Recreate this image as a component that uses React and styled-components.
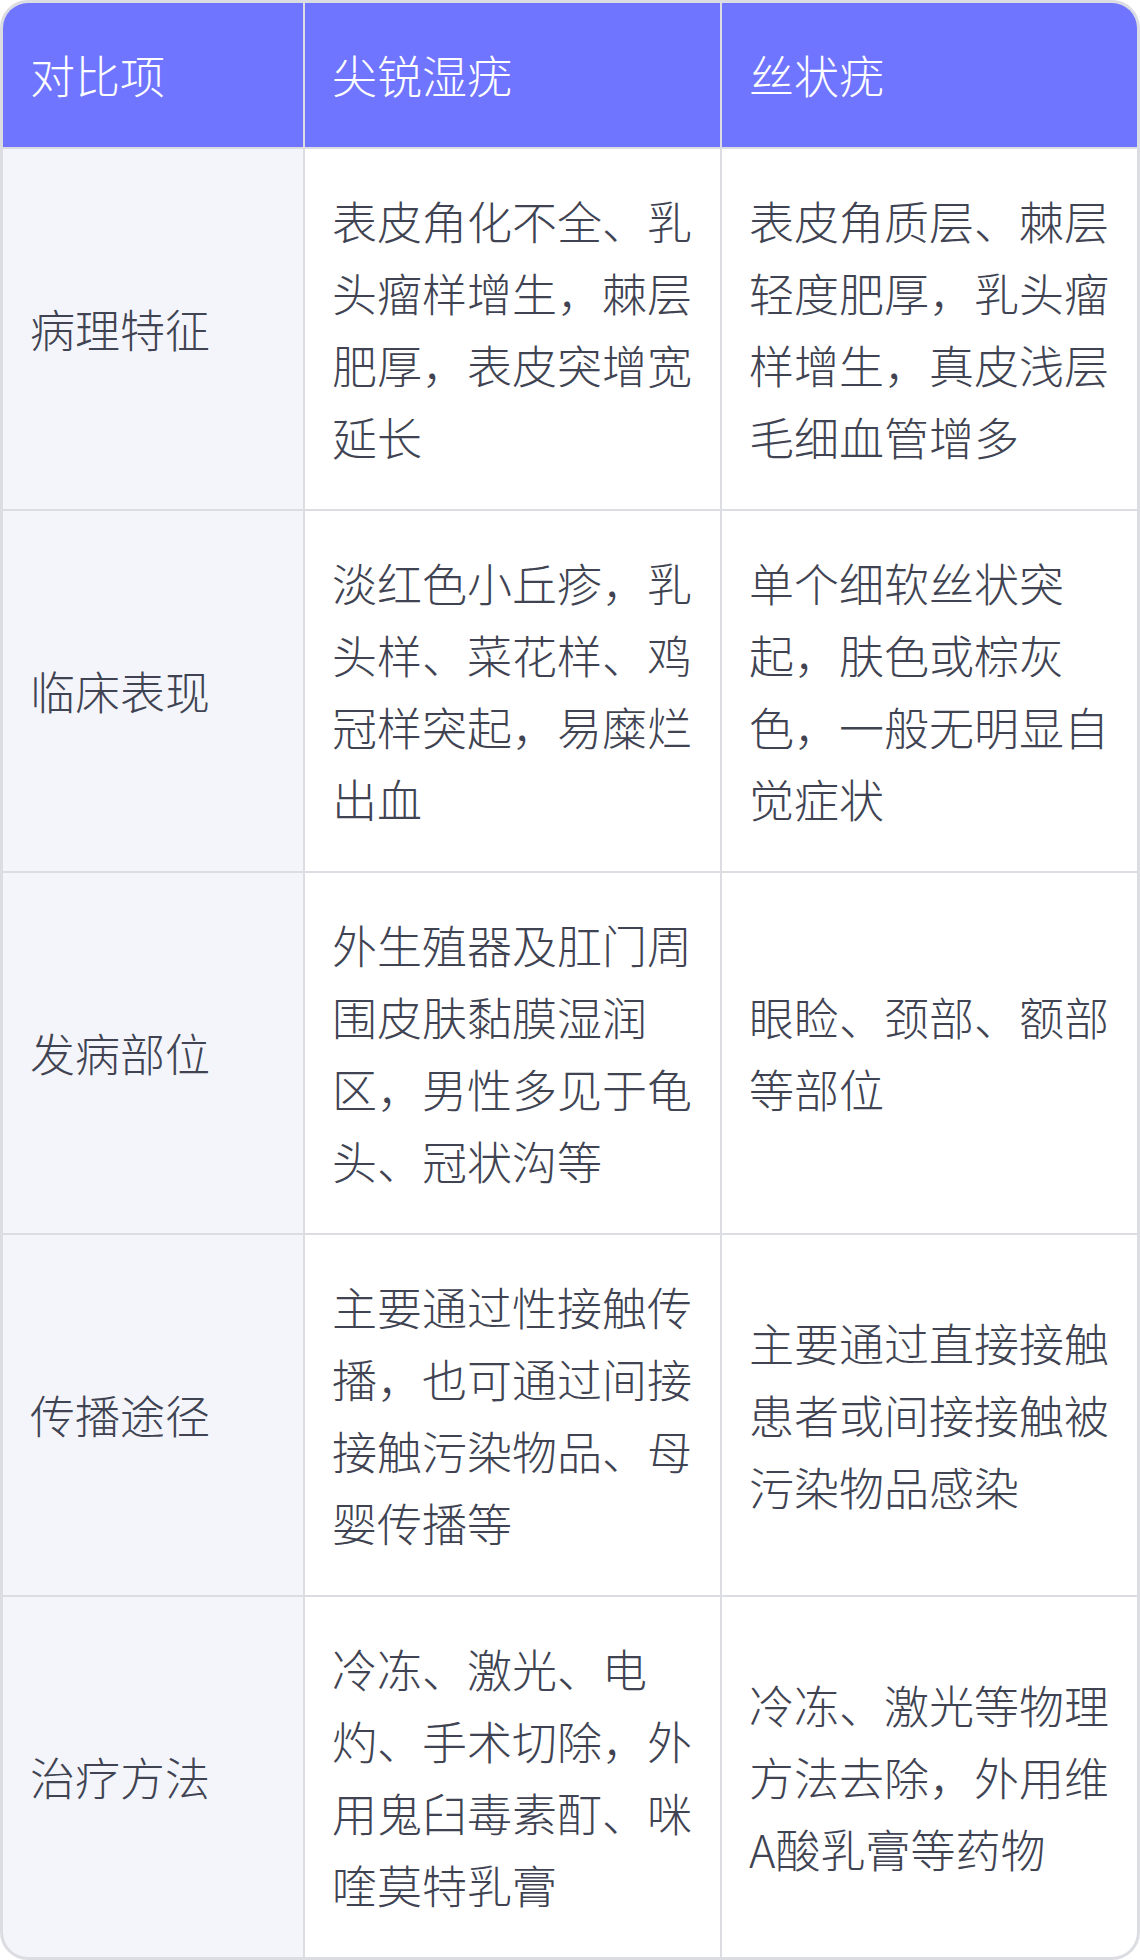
import React from "react";
import styled, { createGlobalStyle } from "styled-components";

const GlobalStyle = createGlobalStyle`
	html, body {
		margin: 0;
		padding: 0;
		background: #ffffff;
	}
	body {
		font-family: "Noto Sans CJK SC Light", "Noto Sans CJK SC DemiLight",
			"Noto Sans CJK SC", "Noto Sans", sans-serif;
	}
`;

//Styles

const TableWrap = styled.div`
	width: 1140px;
	box-sizing: border-box;
	border: 3px solid #dcdde3;
	border-radius: 28px;
	overflow: hidden;
	background: #dcdde3;
`;

const Grid = styled.div`
	display: grid;
	grid-template-columns: 300px 415px 415px;
	gap: 2px;
`;

const HeadCell = styled.div`
	background: #7075ff;
	color: #ffffff;
	font-size: 45px;
	font-weight: 300;
	line-height: 72px;
	padding: 36px 27px;
	height: 144px;
	box-sizing: border-box;
`;

const Cell = styled.div`
	background: ${(pr) => (pr.$label ? "#f4f5fa" : "#ffffff")};
	color: #404352;
	font-size: 45px;
	font-weight: 300;
	line-height: 72px;
	padding: 36px 27px;
	height: 360px;
	box-sizing: border-box;
	display: flex;
	align-items: center;
`;

const rows = [
	{
		label: "病理特征",
		a: "表皮角化不全、乳头瘤样增生，棘层肥厚，表皮突增宽延长",
		b: "表皮角质层、棘层轻度肥厚，乳头瘤样增生，真皮浅层毛细血管增多",
	},
	{
		label: "临床表现",
		a: "淡红色小丘疹，乳头样、菜花样、鸡冠样突起，易糜烂出血",
		b: "单个细软丝状突起，肤色或棕灰色，一般无明显自觉症状",
	},
	{
		label: "发病部位",
		a: "外生殖器及肛门周围皮肤黏膜湿润区，男性多见于龟头、冠状沟等",
		b: "眼睑、颈部、额部等部位",
	},
	{
		label: "传播途径",
		a: "主要通过性接触传播，也可通过间接接触污染物品、母婴传播等",
		b: "主要通过直接接触患者或间接接触被污染物品感染",
	},
	{
		label: "治疗方法",
		a: "冷冻、激光、电灼、手术切除，外用鬼臼毒素酊、咪喹莫特乳膏",
		b: "冷冻、激光等物理方法去除，外用维A酸乳膏等药物",
	},
];

const App = () => {
	return (
		<>
			<GlobalStyle />
			<TableWrap>
				<Grid>
					<HeadCell>对比项</HeadCell>
					<HeadCell>尖锐湿疣</HeadCell>
					<HeadCell>丝状疣</HeadCell>
					{rows.map((row) => (
						<React.Fragment key={row.label}>
							<Cell $label>{row.label}</Cell>
							<Cell>
								<span>{row.a}</span>
							</Cell>
							<Cell>
								<span>{row.b}</span>
							</Cell>
						</React.Fragment>
					))}
				</Grid>
			</TableWrap>
		</>
	);
};

export default App;
